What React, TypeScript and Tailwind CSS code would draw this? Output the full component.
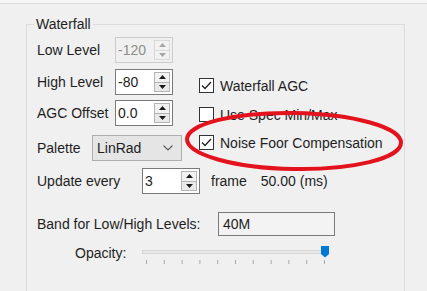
import React from 'react'

const font = { fontFamily: '"Liberation Sans", Arial, sans-serif' }

const Arrow: React.FC<{ up?: boolean; color: string }> = ({ up, color }) => (
  <svg width="7" height="4" viewBox="0 0 7 4">
    {up ? <path d="M0 4 L3.5 0 L7 4 Z" fill={color} /> : <path d="M0 0 L7 0 L3.5 4 Z" fill={color} />}
  </svg>
)

const Spin: React.FC<{ value: string; disabled?: boolean }> = ({ value, disabled }) => (
  <div
    className={
      disabled
        ? 'flex w-[58px] h-[26px] border border-[#cccccc] bg-[#f0f0f0] text-[#8d8d8d]'
        : 'flex w-[58px] h-[26px] border border-[#7a7a7a] bg-white text-[#1e1e1e]'
    }
  >
    <div className="flex-1 flex items-center pl-[2px]">{value}</div>
    <div
      className={
        disabled
          ? 'flex flex-col w-[16px] my-[2px] mr-[2px] border border-[#dadada]'
          : 'flex flex-col w-[16px] my-[2px] mr-[2px] border border-[#b4b4b4]'
      }
    >
      <div className="flex-1 flex items-center justify-center bg-[#f2f2f2]">
        <Arrow up color={disabled ? '#a6a6a6' : '#1a1a1a'} />
      </div>
      <div
        className={
          disabled
            ? 'flex-1 flex items-center justify-center bg-[#f2f2f2] border-t border-[#dadada]'
            : 'flex-1 flex items-center justify-center bg-[#e9e9e9] border-t border-[#b4b4b4]'
        }
      >
        <Arrow color={disabled ? '#a6a6a6' : '#1a1a1a'} />
      </div>
    </div>
  </div>
)

const Check: React.FC<{ checked?: boolean; label: string; className?: string }> = ({ checked, label, className }) => (
  <div className={`flex items-center h-[15px] ${className ?? ''}`}>
    <div className="w-[15px] h-[15px] border border-[#333333] bg-white flex items-center justify-center">
      {checked && (
        <svg width="11" height="9" viewBox="0 0 11 9">
          <polyline points="1,4.5 4,7.5 10,1" fill="none" stroke="#222" strokeWidth="1.3" />
        </svg>
      )}
    </div>
    <span className="ml-[6px] leading-[16px]">{label}</span>
  </div>
)

const App: React.FC = () => {
  return (
    <div style={font} className="relative w-[427px] h-[291px] overflow-hidden bg-[#f0f0f0] text-[14px] text-[#1e1e1e]">
      <div className="h-[4px] bg-[#f5f5f5] border-b border-[#dcdcdc]" />

      <fieldset className="ml-[26px] mt-[12px] w-[379px] border border-[#dcdcdc] px-[10px] pt-[5px] pb-[60px]">
        <legend className="-ml-[3px] px-[2px] leading-[16px]">Waterfall</legend>

        <div className="flex">
          <div className="flex flex-col w-[162px]">
            <div className="flex items-center h-[26px]">
              <span className="w-[78px]">Low Level</span>
              <Spin value="-120" disabled />
            </div>
            <div className="flex items-center h-[26px] mt-[6px]">
              <span className="w-[78px]">High Level</span>
              <Spin value="-80" />
            </div>
            <div className="flex items-center h-[26px] mt-[5px]">
              <span className="w-[78px]">AGC Offset</span>
              <Spin value="0.0" />
            </div>
            <div className="flex items-center h-[26px] mt-[9px]">
              <span className="w-[55px]">Palette</span>
              <div className="flex items-center justify-between w-[90px] h-[26px] bg-[#e5e5e5] border border-[#adadad] pl-[4px] pr-[8px]">
                <span>LinRad</span>
                <svg width="10" height="6" viewBox="0 0 10 6">
                  <polyline points="0.5,0.5 5,5 9.5,0.5" fill="none" stroke="#5a5a5a" strokeWidth="1.1" />
                </svg>
              </div>
            </div>
          </div>
          <div className="flex flex-col pt-[41px]">
            <Check checked label="Waterfall AGC" />
            <Check label="Use Spec Min/Max" className="mt-[14px]" />
            <Check checked label="Noise Foor Compensation" className="mt-[13px]" />
          </div>
        </div>

        <div className="flex items-center h-[26px] mt-[7px]">
          <span className="w-[105px]">Update every</span>
          <Spin value="3" />
          <span className="ml-[11px]">frame</span>
          <span className="ml-[14px]">50.00 (ms)</span>
        </div>

        <div className="flex items-center h-[24px] mt-[18px]">
          <span className="w-[181px]">Band for Low/High Levels:</span>
          <div className="flex items-center w-[117px] h-[24px] border border-[#7a7a7a] bg-[#f3f3f3] pl-[4px]">40M</div>
        </div>

        <div className="flex items-start mt-[10px]">
          <span className="w-[105px] pl-[38px] leading-[16px] -mt-[1px]">Opacity:</span>
          <svg width="190" height="22" viewBox="0 0 190 22">
            <rect x="0.5" y="4.5" width="186" height="3" fill="#e7e7e7" stroke="#d6d6d6" />
            {Array.from({ length: 11 }).map((_, i) => (
              <line key={i} x1={4.5 + i * 17.8} y1="14" x2={4.5 + i * 17.8} y2="18" stroke="#a8a8a8" strokeWidth="1" />
            ))}
            <path d="M179 0 H187 V8 L183 11.5 L179 8 Z" fill="#0078d7" />
          </svg>
        </div>
      </fieldset>

      <svg className="absolute left-0 top-0 pointer-events-none" width="427" height="291" viewBox="0 0 427 291">
        <ellipse cx="294" cy="141" rx="107" ry="28" fill="none" stroke="#e3121c" strokeWidth="4" transform="rotate(1 294 141)" />
      </svg>
    </div>
  )
}

export default App
